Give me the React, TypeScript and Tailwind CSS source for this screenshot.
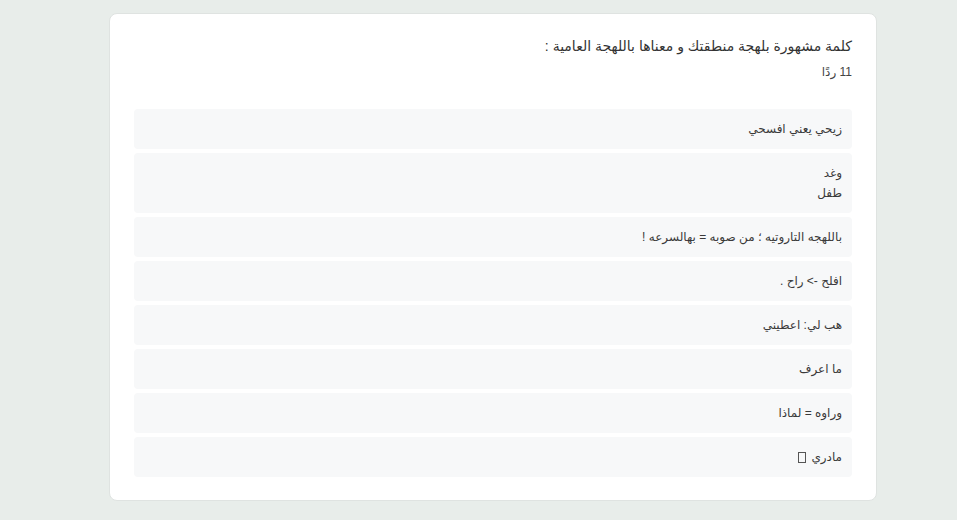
const answers: string[][] = [
  ['زيحي يعني افسحي'],
  ['وغد', 'طفل'],
  ['باللهجه التاروتيه ؛ من صوبه = بهالسرعه !'],
  ['افلح -> راح .'],
  ['هب لي: اعطيني'],
  ['ما اعرف'],
  ['وراوه = لماذا'],
  ['مادري'],
];

export default function App() {
  return (
    <div className="min-h-[520px] bg-[#e8edea] pt-[13px] pb-[19px]" style={{ fontFamily: '"Liberation Sans", "DejaVu Sans", Arial, sans-serif' }}>
      <div dir="rtl" className="ml-[109px] w-[768px] h-[488px] bg-white rounded-lg border border-[#dfe3e1] px-6 pt-[23px]">
        <h1 className="text-[14px] leading-[18px] text-[#333]">كلمة مشهورة بلهجة منطقتك و معناها باللهجة العامية :</h1>
        <p className="mt-[9px] text-[12px] leading-[16px] text-[#444]">11 ردًا</p>
        <ul className="mt-[29px] flex flex-col gap-[4px]">
          {answers.map((lines, i) => (
            <li key={i} className="bg-[#f7f8f9] rounded-[4px] px-[10px] py-[12px] text-[12px] leading-[16px] text-[#3a3a3a]">
              {lines.map((l, j) => (
                <div key={j} className={j > 0 ? 'mt-[4px]' : ''}>
                  {l}
                  {i === answers.length - 1 && (
                    <span className="inline-block align-middle mr-[5px] w-[8px] h-[11px] border border-[#555]" />
                  )}
                </div>
              ))}
            </li>
          ))}
        </ul>
      </div>
    </div>
  );
}
